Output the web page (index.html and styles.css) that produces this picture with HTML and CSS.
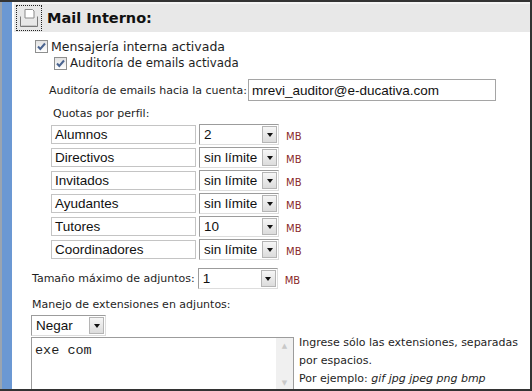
FILE: index.html
```html
<!DOCTYPE html>
<html lang="es">
<head>
  <meta charset="UTF-8">
  <title>Mail Interno</title>
  <link rel="stylesheet" href="styles.css">
</head>
<body>
  <div class="frame">
    <div class="side"></div>
    <div class="main">
      <div class="header">
        <div class="hicon">
          <svg width="24" height="24" viewBox="0 0 24 24">
            <path d="M8 3.5h7.5l1.5 1.5v7H8z" fill="#fff" stroke="#8a8a8a"/>
            <path d="M3.5 10.5v10h17v-10" fill="none" stroke="#7a7a7a"/>
            <path d="M4.5 19.5h15" stroke="#c8c8c8"/>
          </svg>
        </div>
        <span class="htitle">Mail Interno:</span>
      </div>

      <div class="content">
        <div class="check-row lvl1">
          <span class="cbox"><svg width="11" height="11" viewBox="0 0 11 11"><path d="M2 5.5l2.3 2.5L9 2.5" fill="none" stroke="#4a6490" stroke-width="2"/></svg></span>
          <span>Mensajería interna activada</span>
        </div>
        <div class="check-row lvl2">
          <span class="cbox"><svg width="11" height="11" viewBox="0 0 11 11"><path d="M2 5.5l2.3 2.5L9 2.5" fill="none" stroke="#4a6490" stroke-width="2"/></svg></span>
          <span>Auditoría de emails activada</span>
        </div>
        <div class="audit-row">
          <span>Auditoría de emails hacia la cuenta:</span>
          <div class="text-in email">mrevi_auditor@e-ducativa.com</div>
        </div>
        <div class="sub-label">Quotas por perfil:</div>

        <div class="quotas">
          <div class="quota">
            <div class="text-in name">Alumnos</div>
            <div class="select q"><span>2</span><b class="arrow"></b></div>
            <span class="unit">MB</span>
          </div>
          <div class="quota">
            <div class="text-in name">Directivos</div>
            <div class="select q"><span>sin límite</span><b class="arrow"></b></div>
            <span class="unit">MB</span>
          </div>
          <div class="quota">
            <div class="text-in name">Invitados</div>
            <div class="select q"><span>sin límite</span><b class="arrow"></b></div>
            <span class="unit">MB</span>
          </div>
          <div class="quota">
            <div class="text-in name">Ayudantes</div>
            <div class="select q"><span>sin límite</span><b class="arrow"></b></div>
            <span class="unit">MB</span>
          </div>
          <div class="quota">
            <div class="text-in name">Tutores</div>
            <div class="select q"><span>10</span><b class="arrow"></b></div>
            <span class="unit">MB</span>
          </div>
          <div class="quota">
            <div class="text-in name">Coordinadores</div>
            <div class="select q"><span>sin límite</span><b class="arrow"></b></div>
            <span class="unit">MB</span>
          </div>
        </div>

        <div class="size-row">
          <span>Tamaño máximo de adjuntos:</span>
          <div class="select q"><span>1</span><b class="arrow"></b></div>
          <span class="unit">MB</span>
        </div>
        <div class="ext-label">Manejo de extensiones en adjuntos:</div>
        <div class="select negar"><span>Negar</span><b class="arrow"></b></div>
        <div class="ext-row">
          <div class="textarea">
            <div class="ta-text">exe com</div>
            <div class="ta-scroll"><i>&#9650;</i><i>&#9660;</i></div>
          </div>
          <div class="help">
            Ingrese sólo las extensiones, separadas<br>
            por espacios.<br>
            Por ejemplo: <em>gif jpg jpeg png bmp</em>
          </div>
        </div>
      </div>
    </div>
  </div>
</body>
</html>
```

FILE: styles.css
```css
html, body { margin: 0; padding: 0; background: #fff; }
body { font-family: "DejaVu Sans", Verdana, sans-serif; font-size: 11px; color: #1e1e1e; }
.frame { display: flex; width: 532px; height: 391px; box-sizing: border-box; border-top: 2px solid #333; border-right: 2px solid #333; border-bottom: 2px solid #333; overflow: hidden; }
.side { width: 10px; flex: none; background: #6b98d3; border-left: 2px solid #9aa4b0; margin-right: 2px; }
.main { flex: 1; display: flex; flex-direction: column; min-width: 0; }

.header { height: 30px; flex: none; background: #e8e8e8; border-top: 2px solid #f4f4f4; box-sizing: border-box; display: flex; align-items: center; padding-left: 2px; }
.hicon { width: 24px; height: 24px; border: 1px dotted #222; display: flex; align-items: center; justify-content: center; }
.htitle { margin-left: 5px; font-weight: bold; font-size: 14.5px; color: #111; }

.content { padding-left: 17px; }
.check-row { display: flex; align-items: center; height: 16px; }
.lvl1 { margin-top: 6px; margin-left: 4px; font-size: 12.5px; }
.lvl2 { margin-top: 1px; margin-left: 23px; font-size: 11.8px; }
.cbox { width: 11px; height: 11px; flex: none; border: 1px solid #8e8f8f; background: linear-gradient(#e2e2e2, #fff); margin-right: 3px; display: flex; }

.audit-row { display: flex; align-items: center; margin-top: 8px; margin-left: 18px; height: 22px; }
.text-in { border: 1px solid #c4c4c4; box-sizing: border-box; font-family: "Liberation Sans", Arial, sans-serif; font-size: 13.5px; color: #111; display: flex; align-items: center; padding-left: 3px; }
.email { width: 248px; height: 22px; margin-left: 1px; border-color: #a5a5a5; }
.sub-label { margin-top: 5px; line-height: 16px; margin-left: 22px; }

.quotas { display: flex; flex-direction: column; gap: 2px; margin-top: 2px; margin-left: 20px; }
.quota { display: flex; align-items: center; height: 21px; }
.name { width: 145px; height: 19px; padding-left: 3px; }
.select { display: flex; align-items: center; justify-content: space-between; box-sizing: border-box; height: 21px; border: 1px solid #9c9c9c; border-right-color: #ddd; border-bottom-color: #ddd; font-family: "Liberation Sans", Arial, sans-serif; font-size: 13.5px; color: #111; padding-left: 4px; padding-right: 1px; }
.q { width: 80px; margin-left: 3px; }
.arrow { width: 15px; height: 17px; box-sizing: border-box; border: 1px solid #b5b5b5; background: linear-gradient(#f6f6f6, #dcdcdc); display: flex; align-items: center; justify-content: center; }
.arrow::after { content: ""; border-left: 3px solid transparent; border-right: 3px solid transparent; border-top: 4px solid #111; }
.unit { margin-left: 7px; color: #8a2a2a; font-size: 10px; padding-top: 4px; }

.size-row { display: flex; align-items: center; margin-top: 8px; margin-left: 1px; height: 21px; }
.ext-label { margin-top: 8px; line-height: 16px; margin-left: 1px; }
.negar { width: 75px; margin-top: 2px; }
.ext-row { display: flex; margin-top: 1px; }
.textarea { width: 263px; height: 55px; flex: none; box-sizing: border-box; border: 1px solid #9c9c9c; display: flex; }
.ta-text { flex: 1; font-family: "Liberation Mono", "Courier New", monospace; font-size: 13.5px; padding: 5px 3px; }
.ta-scroll { width: 17px; background: #f0f0f0; display: flex; flex-direction: column; justify-content: space-between; align-items: center; color: #c8c8c8; font-size: 7px; padding: 4px 0; }
.ta-scroll i { font-style: normal; }
.help { flex: none; white-space: nowrap; margin-left: 5px; margin-top: -3px; line-height: 18px; font-size: 11px; }
.help em { font-style: italic; }
```
